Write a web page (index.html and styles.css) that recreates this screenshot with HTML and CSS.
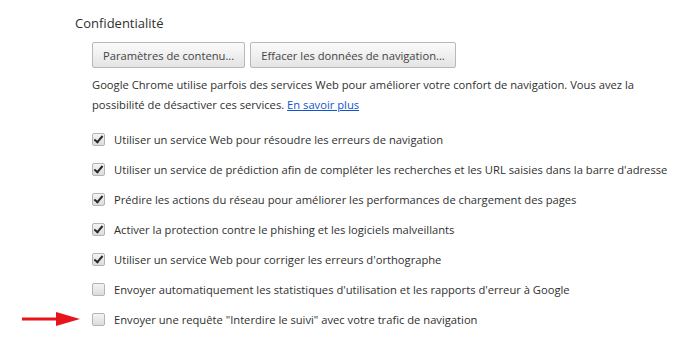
FILE: index.html
```html
<!DOCTYPE html>
<html lang="fr">
<head>
    <meta charset="UTF-8">
    <title>Confidentialité</title>
    <link rel="stylesheet" href="styles.css">
</head>
<body>
    <div class="section">
        <h3>Confidentialité</h3>
        <div class="content">
            <div class="buttons">
                <button>Paramètres de contenu...</button>
                <button>Effacer les données de navigation...</button>
            </div>
            <p class="intro">Google Chrome utilise parfois des services Web pour améliorer votre confort de navigation. Vous avez la possibilité de désactiver ces services. <a href="#">En savoir plus</a></p>
            <ul class="options">
                <li><span class="box checked"></span>Utiliser un service Web pour résoudre les erreurs de navigation</li>
                <li><span class="box checked"></span>Utiliser un service de prédiction afin de compléter les recherches et les URL saisies dans la barre d'adresse</li>
                <li><span class="box checked"></span>Prédire les actions du réseau pour améliorer les performances de chargement des pages</li>
                <li><span class="box checked"></span>Activer la protection contre le phishing et les logiciels malveillants</li>
                <li><span class="box checked"></span>Utiliser un service Web pour corriger les erreurs d'orthographe</li>
                <li><span class="box"></span>Envoyer automatiquement les statistiques d'utilisation et les rapports d'erreur à Google</li>
                <li class="marked">
                    <svg class="arrow" width="60" height="16" viewBox="0 0 60 16">
                        <rect x="0" y="6.5" width="36" height="3" fill="#e8141b"/>
                        <polygon points="34,1 58,8 34,15" fill="#e8141b"/>
                    </svg>
                    <span class="box"></span>Envoyer une requête "Interdire le suivi" avec votre trafic de navigation
                </li>
            </ul>
        </div>
    </div>
</body>
</html>
```

FILE: styles.css
```css
* {
    margin: 0;
    padding: 0;
    box-sizing: border-box;
}
body {
    font-family: "Open Sans", "Noto Sans", sans-serif;
    font-size: 11.2px;
    color: #303030;
    background: #ffffff;
    padding: 14px 0 0 75px;
}
h3 {
    font-size: 13px;
    font-weight: normal;
    color: #303030;
    line-height: 18px;
    margin-bottom: 10px;
}
.content {
    padding-left: 17px;
}
.buttons {
    display: flex;
    gap: 5px;
}
button {
    font-family: inherit;
    font-size: 11.2px;
    color: #444;
    height: 26px;
    padding: 0 10px;
    border: 1px solid #b8b8b8;
    border-radius: 2px;
    background: linear-gradient(#fbfbfb, #e4e4e4);
}
.intro {
    line-height: 20px;
    margin-top: 7px;
    max-width: 580px;
}
.intro a {
    color: #1155cc;
}
.options {
    list-style: none;
    margin-top: 9px;
}
.options li {
    display: flex;
    align-items: center;
    height: 30px;
    white-space: nowrap;
    position: relative;
}
.box {
    width: 13px;
    height: 13px;
    flex-shrink: 0;
    border: 1px solid #b4b4b4;
    border-radius: 2px;
    background: linear-gradient(#f4f4f4, #dcdcdc);
    margin-right: 9px;
    position: relative;
}
.box.checked::after {
    content: "";
    position: absolute;
    left: 3px;
    top: 0px;
    width: 3px;
    height: 7px;
    border: solid #2a2a2a;
    border-width: 0 2.5px 2.5px 0;
    transform: rotate(40deg);
}
.arrow {
    position: absolute;
    left: -70px;
    top: 7px;
}
```
